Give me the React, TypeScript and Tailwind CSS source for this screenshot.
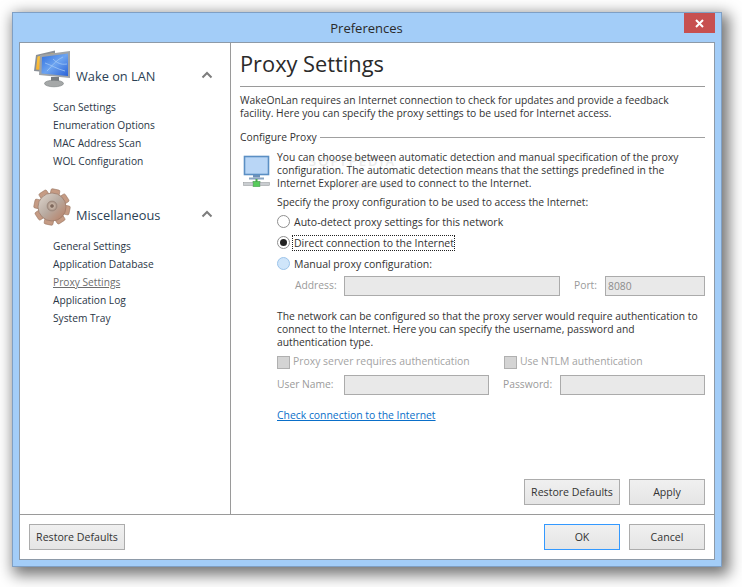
const font = "font-['Open_Sans','Liberation_Sans',sans-serif]";

function MonitorBig() {
  return (
    <svg width="40" height="40" viewBox="0 0 40 40" className="shrink-0">
      <defs>
        <linearGradient id="scr" x1="0" y1="0" x2="1" y2="1">
          <stop offset="0" stopColor="#2f6fe0" />
          <stop offset="0.5" stopColor="#6da4f0" />
          <stop offset="1" stopColor="#2a62d8" />
        </linearGradient>
        <linearGradient id="back" x1="0" y1="0" x2="1" y2="1">
          <stop offset="0" stopColor="#ffcc44" />
          <stop offset="1" stopColor="#f09a1c" />
        </linearGradient>
      </defs>
      <path d="M3 6 L22 1.5 L22 24 L1 22 Z" fill="#8a8f96" />
      <path d="M4.5 7.5 L21 4 L21 22 L3 20.5 Z" fill="url(#back)" />
      <path d="M7 6 L37 2 L37 29 L6 26 Z" fill="#9ea3a8" />
      <path d="M9 8 L35 4.5 L35 27 L8.5 24.5 Z" fill="url(#scr)" />
      <path d="M14 22 C20 16 22 12 30 8 M20 10 C24 14 28 16 34 15 M12 14 C18 16 24 20 32 22" stroke="#a9cdf7" strokeWidth="0.7" fill="none" />
      <rect x="18" y="28" width="8" height="4" fill="#777c82" />
      <ellipse cx="21" cy="34.5" rx="9.5" ry="3.3" fill="#a5a8a8" stroke="#74787a" strokeWidth="0.6" />
    </svg>
  );
}

function GearBig() {
  const teeth = [0, 45, 90, 135, 180, 225, 270, 315];
  return (
    <svg width="38" height="38" viewBox="0 0 38 38" className="shrink-0">
      <defs>
        <linearGradient id="gear" x1="0" y1="0" x2="1" y2="1">
          <stop offset="0" stopColor="#e0d8d0" />
          <stop offset="0.5" stopColor="#b8aaa0" />
          <stop offset="1" stopColor="#b87c60" />
        </linearGradient>
        <radialGradient id="hub">
          <stop offset="0" stopColor="#8a7468" />
          <stop offset="0.45" stopColor="#c9b6a8" />
          <stop offset="1" stopColor="#a08c80" />
        </radialGradient>
      </defs>
      {teeth.map((a) => (
        <rect key={a} x="14.5" y="1" width="9" height="9" rx="1.5" fill="#c59b84" stroke="#8f6a55" strokeWidth="0.5" transform={`rotate(${a + 12} 19 19)`} />
      ))}
      <circle cx="19" cy="19" r="14" fill="url(#gear)" stroke="#9a7765" strokeWidth="0.7" />
      <circle cx="19" cy="18" r="5" fill="url(#hub)" stroke="#8e7a6e" strokeWidth="0.5" />
      <circle cx="19" cy="18" r="1.8" fill="#7d675b" />
    </svg>
  );
}

function NetworkIcon() {
  return (
    <svg width="27" height="33" viewBox="0 0 27 33" className="shrink-0">
      <rect x="1.5" y="1.5" width="24" height="18" fill="#b9d6f6" stroke="#5b8fc4" strokeWidth="1.6" />
      <rect x="10" y="20" width="7" height="2.5" fill="#6c90b8" />
      <rect x="6" y="22.5" width="15" height="2" fill="#8aa5c2" />
      <rect x="12.5" y="24" width="2" height="3" fill="#4ea84e" />
      <rect x="10" y="26.5" width="7" height="5" fill="#57cc5a" stroke="#3f9c45" strokeWidth="0.6" />
      <rect x="0.5" y="27.5" width="9.5" height="3" fill="#c9cdd0" stroke="#8d9296" strokeWidth="0.5" />
      <rect x="17" y="27.5" width="9.5" height="3" fill="#c9cdd0" stroke="#8d9296" strokeWidth="0.5" />
    </svg>
  );
}

function Chevron() {
  return (
    <svg width="12" height="8" viewBox="0 0 12 8" className="shrink-0">
      <path d="M1.5 6.5 L6 2 L10.5 6.5" stroke="#7d7d7d" strokeWidth="2" fill="none" />
    </svg>
  );
}

function Section({ icon, title, items, active }: { icon: React.ReactNode; title: string; items: string[]; active?: string }) {
  return (
    <div>
      <div className="flex h-[38px] items-center pl-[13px] pr-[17px]">
        <div className="flex h-[38px] w-[43px] shrink-0 items-start">{icon}</div>
        <div className="mt-[15px] flex-1 text-[12.8px] leading-[20px] text-[#2b3f55]">{title}</div>
        <div className="mt-[14px]">
          <Chevron />
        </div>
      </div>
      <div className="mt-[11px] pl-[33px]">
        {items.map((it) => (
          <div key={it} className={`h-[18px] text-[10.2px] leading-[18px] ${it === active ? "text-[#6d6d6d] underline" : "text-[#2a3646]"}`}>
            {it}
          </div>
        ))}
      </div>
    </div>
  );
}

function Btn({ label, w, focus }: { label: string; w: string; focus?: boolean }) {
  return (
    <button className={`h-[26px] ${w} border bg-gradient-to-b from-[#f0f0f0] to-[#e5e5e5] pt-px text-[10.6px] text-[#333] ${focus ? "border-[#3399ff]" : "border-[#acacac]"}`}>
      {label}
    </button>
  );
}

function Radio({ label, checked, hot, dotted }: { label: string; checked?: boolean; hot?: boolean; dotted?: boolean }) {
  return (
    <div className="flex h-[21px] items-center">
      <span className={`flex h-[13px] w-[13px] items-center justify-center rounded-full border ${hot ? "border-[#9cc4ea] bg-[#cfe5fa]" : "border-[#8f8f8f] bg-white"}`}>
        {checked && <span className="h-[7px] w-[7px] rounded-full bg-[#222]" />}
      </span>
      <span className={`ml-[2px] pl-px text-[10.5px] leading-[14px] text-[#333] ${dotted ? "border border-dotted border-[#222]" : "border border-transparent"}`}>{label}</span>
    </div>
  );
}

function Check({ label, w }: { label: string; w: string }) {
  return (
    <div className={`flex h-[14px] items-center ${w}`}>
      <span className="h-[13px] w-[13px] border border-[#b0b0b0] bg-[#d4d4d4]" />
      <span className="ml-[3px] text-[10.4px] text-[#a3a3a3]">{label}</span>
    </div>
  );
}

function Input({ w, value }: { w: string; value?: string }) {
  return (
    <div className={`h-[20px] ${w} border border-[#ababab] bg-[#e9e9e9] pl-[2px] text-[10.3px] leading-[18px] text-[#8c8c8c]`}>
      {value}
    </div>
  );
}

export default function App() {
  return (
    <div className={`h-[587px] w-[742px] overflow-hidden whitespace-nowrap bg-white pl-[12px] pt-[12px] ${font}`}>
      <div className="flex h-[555px] w-[710px] flex-col border border-[#7f9fc4] bg-[#a3cdf8] shadow-[4px_5px_14px_3px_rgba(0,0,0,0.55)]">
        <div className="relative flex h-[29px] shrink-0 items-center justify-center pr-[1px] pt-[2px]">
          <span className="text-[13px] text-[#2a2a2a]">Preferences</span>
          <div className="absolute right-[6px] top-0 flex h-[20px] w-[31px] items-center justify-center bg-[#c75050]">
            <svg width="9" height="9" viewBox="0 0 9 9">
              <path d="M1 1 L8 8 M8 1 L1 8" stroke="#fff" strokeWidth="2" />
            </svg>
          </div>
        </div>
        <div className="mx-[6px] mb-[6px] flex min-h-0 flex-1 flex-col border border-[#8d9aa8] bg-white">
          <div className="flex min-h-0 flex-1">
            <div className="w-[211px] shrink-0 border-r border-[#9a9a9a] pt-[6px]">
              <Section icon={<MonitorBig />} title="Wake on LAN" items={["Scan Settings", "Enumeration Options", "MAC Address Scan", "WOL Configuration"]} />
              <div className="h-[18px]" />
              <Section
                icon={<GearBig />}
                title="Miscellaneous"
                items={["General Settings", "Application Database", "Proxy Settings", "Application Log", "System Tray"]}
                active="Proxy Settings"
              />
            </div>
            <div className="relative flex min-w-0 flex-1 flex-col px-[9px] text-[10.3px] text-[#333]">
              <div className="h-[44px] border-b border-[#9a9a9a] pt-[3px] text-[21.8px] leading-[36px] text-[#2a2a2a]">Proxy Settings</div>
              <div className="mt-[7px] leading-[13px]">
                WakeOnLan requires an Internet connection to check for updates and provide a feedback
                <br />
                facility. Here you can specify the proxy settings to be used for Internet access.
              </div>
              <div className="mt-[11px] flex h-[14px] items-center">
                <span className="mr-[3px]">Configure Proxy</span>
                <span className="-mt-[2px] h-px flex-1 bg-[#a0a0a0]" />
              </div>
              <div className="mt-[6px] flex">
                <div className="w-[37px] shrink-0 pl-[3px] pt-[4px]">
                  <NetworkIcon />
                </div>
                <div className="relative min-w-0 flex-1">
                  <div className="absolute left-[32px] top-[1px] text-[13px] font-semibold tracking-[2px] text-[#ececec]">SOFTPEDIA</div>
                  <div className="absolute left-[52px] top-[28px] text-[8px] text-[#e4e4e4]">www.softpedia.com</div>
                  <div className="relative leading-[13px]">
                    You can choose between automatic detection and manual specification of the proxy
                    <br />
                    configuration. The automatic detection means that the settings predefined in the
                    <br />
                    Internet Explorer are used to connect to the Internet.
                  </div>
                  <div className="relative mt-[6px] leading-[13px]">Specify the proxy configuration to be used to access the Internet:</div>
                </div>
              </div>
              <div className="mt-[2px] pl-[37px]">
                <Radio label="Auto-detect proxy settings for this network" />
                <Radio label="Direct connection to the Internet" checked dotted />
                <Radio label="Manual proxy configuration:" hot />
                <div className="mt-[2px] flex h-[20px] items-center">
                  <span className="w-[67px] pl-[18px] text-[#9a9a9a]">Address:</span>
                  <Input w="w-[216px]" />
                  <span className="w-[45px] pl-[14px] text-[#9a9a9a]">Port:</span>
                  <Input w="w-[100px]" value="8080" />
                </div>
                <div className="mt-[14px] leading-[13px]">
                  The network can be configured so that the proxy server would require authentication to
                  <br />
                  connect to the Internet. Here you can specify the username, password and
                  <br />
                  authentication type.
                </div>
                <div className="mt-[6px] flex">
                  <Check label="Proxy server requires authentication" w="w-[227px]" />
                  <Check label="Use NTLM authentication" w="w-[200px]" />
                </div>
                <div className="mt-[6px] flex h-[20px] items-center text-[#9a9a9a]">
                  <span className="w-[67px]">User Name:</span>
                  <Input w="w-[145px]" />
                  <span className="w-[71px] pl-[14px]">Password:</span>
                  <Input w="w-[145px]" />
                </div>
                <div className="mt-[13px] text-[10.4px] leading-[14px] text-[#0a6fc9] underline">Check connection to the Internet</div>
              </div>
              <div className="mt-auto mb-[9px] flex justify-end gap-[9px]">
                <Btn label="Restore Defaults" w="w-[96px]" />
                <Btn label="Apply" w="w-[76px]" />
              </div>
            </div>
          </div>
          <div className="flex h-[45px] shrink-0 items-center justify-between border-t border-[#9a9a9a] px-[9px]">
            <Btn label="Restore Defaults" w="w-[96px]" />
            <div className="flex gap-[9px]">
              <Btn label="OK" w="w-[76px]" focus />
              <Btn label="Cancel" w="w-[76px]" />
            </div>
          </div>
        </div>
      </div>
    </div>
  );
}
